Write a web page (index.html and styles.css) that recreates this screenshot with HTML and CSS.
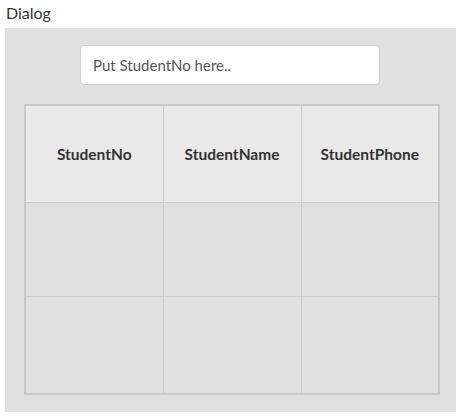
FILE: index.html
```html
<!DOCTYPE html>
<html>
<head>
<meta charset="utf-8">
<link rel="stylesheet" href="styles.css">
</head>
<body>
<div class="title">Dialog</div>
<div class="panel">
  <div class="search-row">
    <input class="search" type="text" placeholder="Put StudentNo here..">
  </div>
  <table class="grid">
    <thead>
      <tr><th>StudentNo</th><th>StudentName</th><th>StudentPhone</th></tr>
    </thead>
    <tbody>
      <tr class="r2"><td></td><td></td><td></td></tr>
      <tr class="r3"><td></td><td></td><td></td></tr>
    </tbody>
  </table>
</div>
</body>
</html>
```
FILE: styles.css
```css
html, body {
  margin: 0;
  padding: 0;
  background: #ffffff;
  font-family: Lato, "Open Sans", sans-serif;
}
.title {
  height: 28px;
  line-height: 26px;
  padding-left: 6px;
  font-size: 16px;
  color: #333;
  box-sizing: border-box;
}
.panel {
  margin-left: 5px;
  width: 451px;
  height: 384px;
  background: #e0e0e0;
  box-sizing: border-box;
  padding-top: 17px;
}
.search-row {
  padding-left: 75px;
}
.search {
  display: block;
  width: 300px;
  height: 40px;
  box-sizing: border-box;
  border: 1px solid #cfcfcf;
  border-radius: 4px;
  background: #fff;
  padding: 0 12px;
  font-family: inherit;
  font-size: 15px;
  color: #555;
  outline: none;
}
.search::placeholder {
  color: #555;
}
.grid {
  margin-top: 19px;
  margin-left: 19px;
  width: 416px;
  border-collapse: collapse;
  border: 2px solid #c9c9c9;
  table-layout: fixed;
}
.grid th, .grid td {
  border: 1px solid #cbcbcb;
  padding: 0;
}
.grid th {
  height: 96px;
  background: #e9e9e9;
  font-size: 15.5px;
  font-weight: bold;
  color: #333;
  text-align: center;
}
.grid td {
  background: #e0e0e0;
}
.grid .r2 td {
  height: 93px;
}
.grid .r3 td {
  height: 96px;
}
```
